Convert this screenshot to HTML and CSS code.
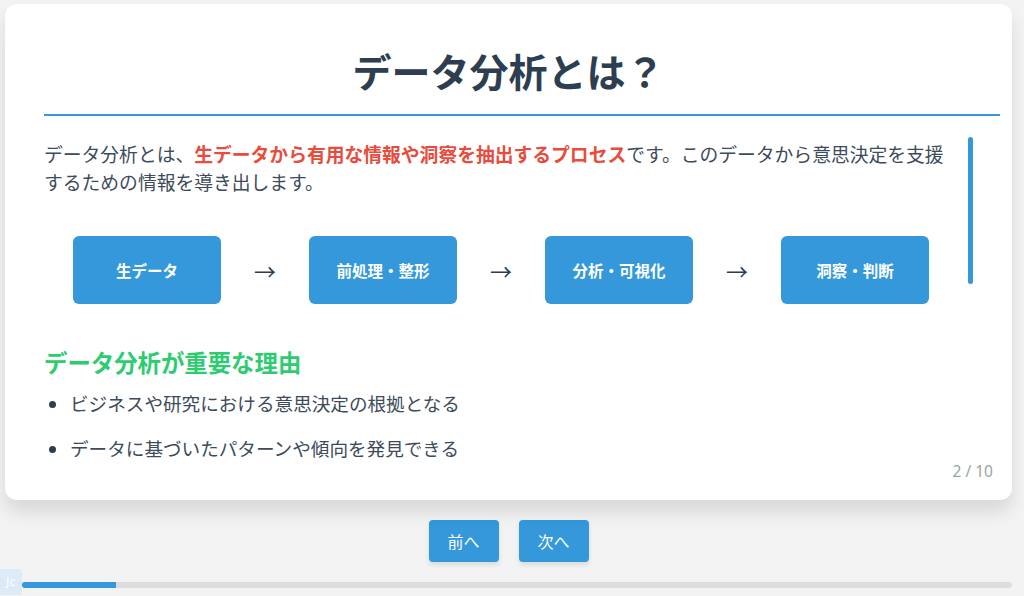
FILE: index.html
```html
<!DOCTYPE html>
<html lang="ja">
<head>
    <meta charset="UTF-8">
    <meta name="viewport" content="width=device-width, initial-scale=1.0">
    <title>データ分析とは？</title>
    <link rel="stylesheet" href="styles.css">
</head>
<body>
    <div class="deck">
        <div class="slide">
            <h1>データ分析とは？</h1>

            <div class="slide-body">
                <p class="lead">データ分析とは、<strong class="hl">生データから有用な情報や洞察を抽出するプロセス</strong>です。このデータから意思決定を支援するための情報を導き出します。</p>

                <div class="flow">
                    <div class="step">生データ</div>
                    <span class="arrow">→</span>
                    <div class="step">前処理・整形</div>
                    <span class="arrow">→</span>
                    <div class="step">分析・可視化</div>
                    <span class="arrow">→</span>
                    <div class="step">洞察・判断</div>
                </div>

                <h2>データ分析が重要な理由</h2>
                <ul class="reasons">
                    <li>ビジネスや研究における意思決定の根拠となる</li>
                    <li>データに基づいたパターンや傾向を発見できる</li>
                </ul>
            </div>

            <div class="scroll-thumb"></div>
            <div class="page-num">2 / 10</div>
        </div>

        <div class="nav">
            <button class="nav-btn">前へ</button>
            <button class="nav-btn">次へ</button>
        </div>

        <div class="progress">
            <div class="progress-fill" style="width: 9.5%;"></div>
        </div>
    </div>

    <div class="corner-badge">Jc</div>
</body>
</html>
```

FILE: styles.css
```css
:root {
    --primary: #3498db;
    --dark: #2c3e50;
    --text: #3d4b5a;
    --accent: #e74c3c;
    --green: #2ecc71;
    --muted: #95a5a6;
}

* {
    box-sizing: border-box;
    margin: 0;
    padding: 0;
}

body {
    background-color: #f3f3f3;
    font-family: "Noto Sans", "Noto Sans CJK JP", sans-serif;
    color: var(--text);
    overflow: hidden;
}

.deck {
    padding: 4px 12px 0 5px;
}

.slide {
    position: relative;
    background: white;
    border-radius: 12px;
    height: 496px;
    padding: 42px 12px 0 39px;
    box-shadow: 0 12px 18px rgba(0, 0, 0, 0.11);
}

h1 {
    padding: 0 27px 20px 0;
    font-family: "Noto Sans CJK JP", sans-serif;
    font-size: 39px;
    font-weight: 700;
    line-height: 48px;
    color: var(--dark);
    text-align: center;
    border-bottom: 2px solid var(--primary);
}

.slide-body {
    padding-right: 40px;
    font-family: "Noto Sans CJK JP", sans-serif;
}

.lead {
    margin-top: 24px;
    font-size: 18.8px;
    line-height: 28px;
}

.hl {
    color: var(--accent);
    font-weight: 700;
}

.flow {
    display: flex;
    justify-content: center;
    align-items: center;
    margin-top: 40px;
    padding-right: 2px;
}

.step {
    width: 148px;
    height: 68px;
    display: flex;
    align-items: center;
    justify-content: center;
    background-color: var(--primary);
    color: white;
    font-size: 15.5px;
    font-weight: 700;
    border-radius: 6px;
}

.arrow {
    margin: 0 33px;
    font-size: 22px;
    color: var(--dark);
}

h2 {
    margin-top: 43px;
    font-size: 23.4px;
    font-weight: 700;
    line-height: 30px;
    color: var(--green);
}

.reasons {
    margin-top: 12px;
    padding-left: 26px;
    font-size: 18.6px;
    line-height: 28px;
}

.reasons li {
    margin-bottom: 17px;
}

.reasons li::marker {
    color: var(--dark);
}

.scroll-thumb {
    position: absolute;
    top: 133px;
    right: 39px;
    width: 5px;
    height: 147px;
    border-radius: 3px;
    background-color: var(--primary);
}

.page-num {
    position: absolute;
    right: 19px;
    bottom: 19px;
    font-size: 15.5px;
    line-height: 20px;
    color: var(--muted);
}

.nav {
    display: flex;
    justify-content: center;
    gap: 20px;
    margin-top: 20px;
}

.nav-btn {
    width: 70px;
    height: 42px;
    border: none;
    border-radius: 4px;
    background-color: var(--primary);
    color: white;
    font-family: "Noto Sans CJK JP", sans-serif;
    font-size: 16px;
    box-shadow: 0 3px 5px rgba(0, 0, 0, 0.1);
}

.progress {
    height: 6px;
    margin: 20px 0 0 17px;
    background-color: #dddddd;
    border-radius: 3px;
    overflow: hidden;
}

.progress-fill {
    height: 100%;
    background-color: var(--primary);
}

.corner-badge {
    position: fixed;
    left: 0;
    bottom: 1px;
    width: 22px;
    height: 26px;
    padding-top: 3px;
    background: rgba(214, 233, 248, 0.8);
    border-radius: 0 4px 4px 0;
    color: rgba(255, 255, 255, 0.9);
    font-family: "Noto Sans", sans-serif;
    font-size: 13px;
    text-align: center;
}
```
